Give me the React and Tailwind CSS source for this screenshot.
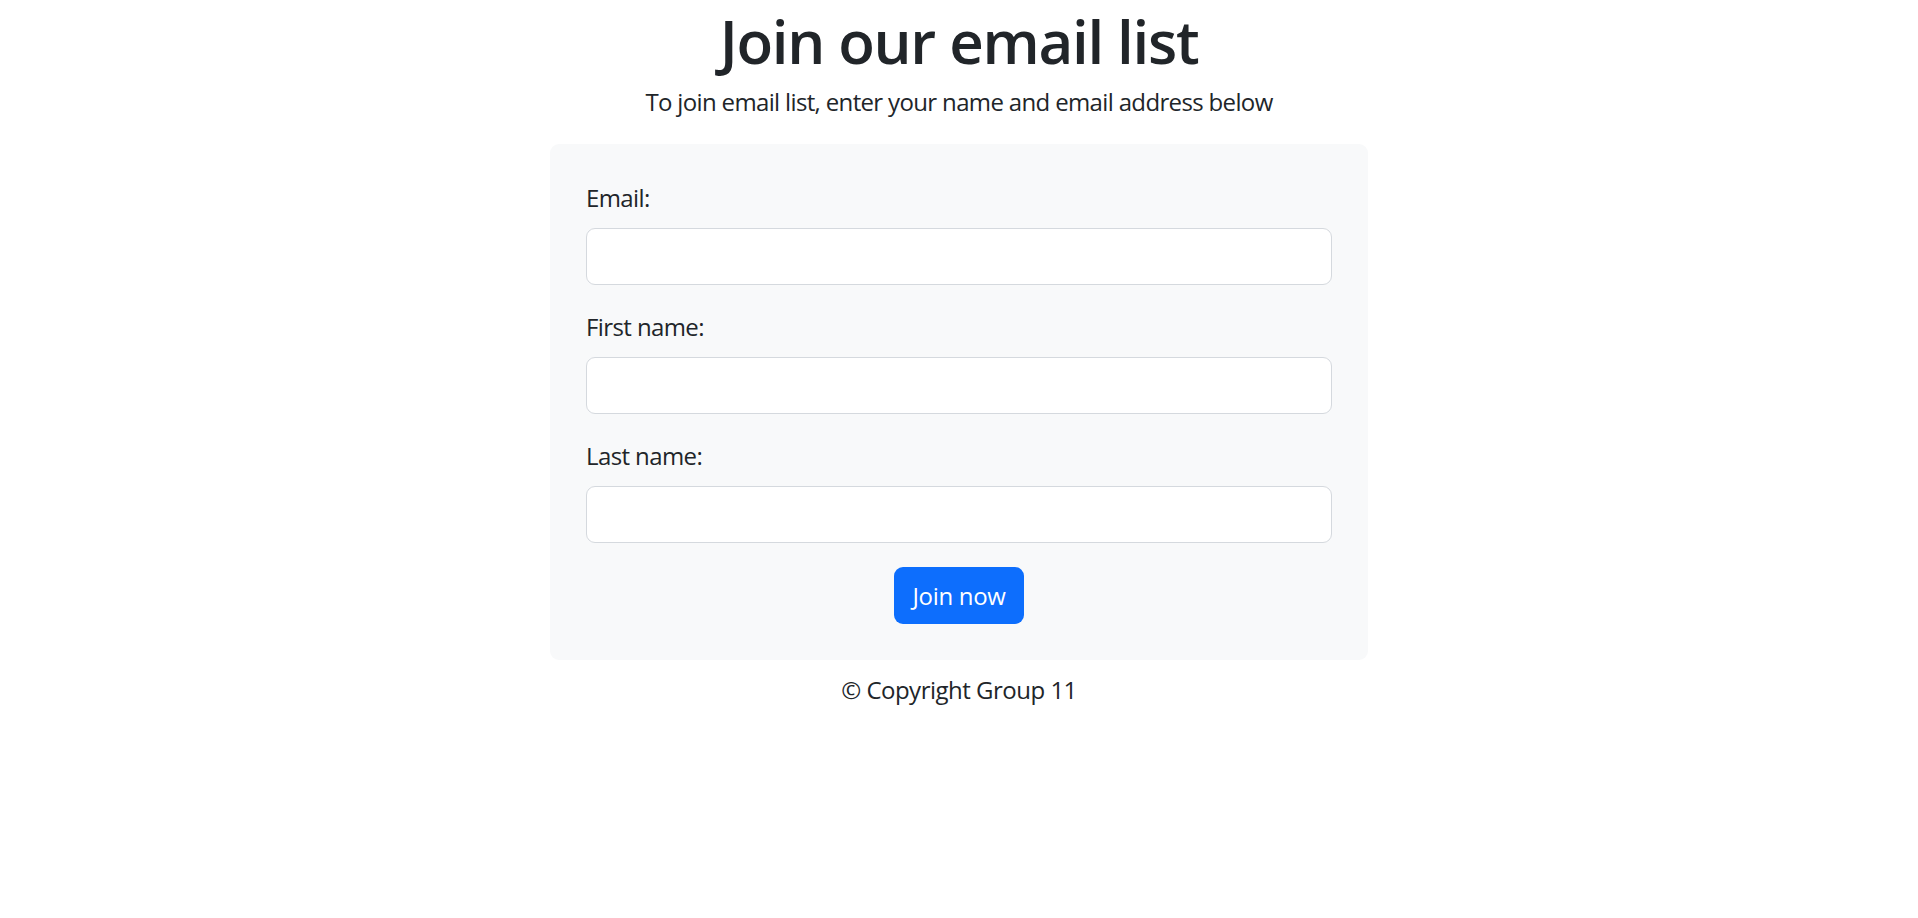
import React from "react";

function Field({ label, id, type = "text" }) {
  return (
    <div className="mb-[24px]">
      <label htmlFor={id} className="block mb-[12px] tracking-[-0.6px]">
        {label}
      </label>
      <input
        id={id}
        type={type}
        className="block w-full h-[57px] bg-white border border-[#d5d9de] rounded-[9px] px-[18px] outline-none"
      />
    </div>
  );
}

export default function App() {
  return (
    <div className="font-['Open_Sans',sans-serif] text-[#212529] text-[24px] leading-[36px] bg-white min-h-[918px]">
      <h1 className="text-center text-[60px] leading-[82px] font-semibold mb-[2px] tracking-[-1.3px]">
        Join our email list
      </h1>
      <p className="text-center mb-[24px] tracking-[-0.65px]">
        To join email list, enter your name and email address below
      </p>
      <form className="mx-auto w-[818px] bg-[#f8f9fa] rounded-[9px] p-[36px]">
        <Field label="Email:" id="email" type="email" />
        <Field label="First name:" id="first" />
        <Field label="Last name:" id="last" />
        <div className="flex justify-center">
          <button
            type="button"
            className="h-[57px] px-[18px] bg-[#0d6efd] text-white rounded-[9px] tracking-[-0.3px] leading-[36px]"
          >
            Join now
          </button>
        </div>
      </form>
      <p className="text-center mt-[12px] tracking-[-0.5px]">© Copyright Group 11</p>
    </div>
  );
}
